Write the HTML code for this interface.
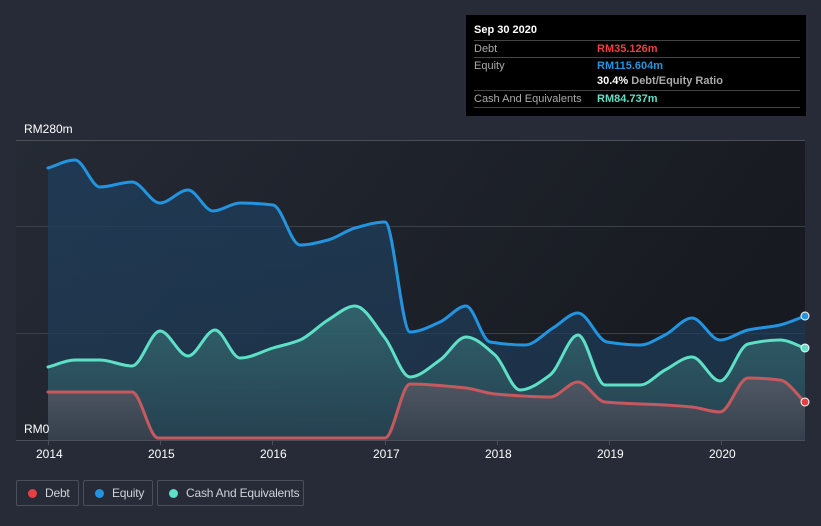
<!DOCTYPE html>
<html><head><style>
body{margin:0;width:821px;height:526px;background:#262b37;font-family:"Liberation Sans",sans-serif;overflow:hidden;position:relative}
.t{position:absolute;color:#fff;font-size:12px}
.leg{position:absolute;top:480px;height:26px;border:1px solid #4a4f5a;border-radius:2px;color:#cfd2d8;font-size:12px;line-height:24px;box-sizing:border-box;white-space:nowrap;letter-spacing:-0.2px}
.leg i{display:inline-block;width:9px;height:9px;border-radius:50%;margin:0 8px 0 11px;vertical-align:-1px}
#tip{position:absolute;left:466px;top:15px;width:340px;height:101px;background:#000;font-size:11px}
#tip .r{position:absolute;left:8px;right:6px;border-top:1px solid #444;height:17px;line-height:17px;color:#aaa}
#tip .r span{position:absolute;left:123px;font-weight:bold}
</style></head><body>
<svg width="821" height="526" style="position:absolute;left:0;top:0">
<defs>
<linearGradient id="bg" x1="0" y1="0" x2="1" y2="0.3"><stop offset="0" stop-color="#252a35"/><stop offset="1" stop-color="#171a20"/></linearGradient>
<linearGradient id="eq" x1="0" y1="0" x2="0" y2="1"><stop offset="0" stop-color="#1e4060" stop-opacity=".7"/><stop offset="1" stop-color="#1e3a55" stop-opacity=".7"/></linearGradient>
<linearGradient id="ca" x1="0" y1="0" x2="0" y2="1"><stop offset="0" stop-color="#3e7f82" stop-opacity=".6"/><stop offset="1" stop-color="#2b4a55" stop-opacity=".6"/></linearGradient>
<linearGradient id="de" x1="0" y1="0" x2="0" y2="1"><stop offset="0" stop-color="#5a5a66" stop-opacity=".8"/><stop offset="1" stop-color="#3a404c" stop-opacity=".8"/></linearGradient>
</defs>
<rect x="16" y="140" width="789" height="300" fill="url(#bg)"/>
<g stroke="#3a3f4a" stroke-width="1"><line x1="16" y1="140.5" x2="805" y2="140.5" stroke="#4a4f5a"/><line x1="16" y1="226.5" x2="805" y2="226.5"/><line x1="16" y1="333.5" x2="805" y2="333.5"/><line x1="16" y1="440.5" x2="805" y2="440.5" stroke="#4a4f5a"/></g>
<g stroke="#4a4f5a"><line x1="48.5" y1="440" x2="48.5" y2="445"/><line x1="160.5" y1="440" x2="160.5" y2="445"/><line x1="272.5" y1="440" x2="272.5" y2="445"/><line x1="385.5" y1="440" x2="385.5" y2="445"/><line x1="497.5" y1="440" x2="497.5" y2="445"/><line x1="609.5" y1="440" x2="609.5" y2="445"/><line x1="721.5" y1="440" x2="721.5" y2="445"/></g>
<path id="eqa" fill="url(#eq)"/><path id="caa" fill="url(#ca)"/><path id="dea" fill="url(#de)"/>
<g fill="none" stroke-width="3" stroke-linejoin="round" stroke-linecap="round">
<path id="eql" stroke="#2394df"/><path id="cal" stroke="#5ee0c6"/><path id="del" stroke="#c5595e"/>
</g>
<circle cx="805" cy="316" r="4" fill="#2394df" stroke="#fff" stroke-width="1"/>
<circle cx="805" cy="348" r="4" fill="#5ee0c6" stroke="#fff" stroke-width="1"/>
<circle cx="805" cy="402" r="4" fill="#e84040" stroke="#fff" stroke-width="1"/>
</svg>
<script>
function sm(p){var n=p.length,s=[],m=[];for(var i=0;i<n-1;i++)s.push((p[i+1][1]-p[i][1])/(p[i+1][0]-p[i][0]));
for(i=0;i<n;i++){if(i==0)m.push(s[0]);else if(i==n-1)m.push(s[n-2]);else if(s[i-1]*s[i]<=0)m.push(0);else m.push(2/(1/s[i-1]+1/s[i]));}
var d="M"+p[0][0]+","+p[0][1];for(i=0;i<n-1;i++){var h=(p[i+1][0]-p[i][0])/3;
d+=" C"+(p[i][0]+h)+","+(p[i][1]+m[i]*h)+" "+(p[i+1][0]-h)+","+(p[i+1][1]-m[i+1]*h)+" "+p[i+1][0]+","+p[i+1][1];}return d;}
var E=[[48,168],[75,160],[100,187],[132,182],[160,203],[188,190],[213,211],[240,203],[273,205],[300,245],[328,240],[355,228],[385,222],[410,332],[440,322],[466,306],[490,342],[525,345],[553,328],[578,313],[607,342],[640,345],[665,335],[692,318],[720,340],[748,330],[780,325],[805,316]];
var C=[[48,367],[75,360],[100,360],[132,366],[160,331],[188,356],[215,330],[240,358],[273,348],[300,340],[328,320],[355,306],[385,338],[410,377],[440,360],[466,337],[495,355],[520,390],[550,375],[578,335],[605,385],[640,385],[665,370],[692,357],[720,381],[748,344],[780,340],[805,348]];
var D=[[48,392],[132,392],[158,438],[385,438],[410,384],[466,388],[495,394],[550,397],[578,382],[605,402],[665,405],[692,407],[720,412],[748,378],[780,380],[805,402]];
[["eq",E],["ca",C],["de",D]].forEach(function(s){var d=sm(s[1]);document.getElementById(s[0]+"l").setAttribute("d",d);document.getElementById(s[0]+"a").setAttribute("d",d+" L805,440 L48,440Z");});
</script>
<div class="t" style="left:24px;top:122px">RM280m</div>
<div class="t" style="left:24px;top:422px">RM0</div>
<div class="t" style="left:36px;top:447px">2014</div>
<div class="t" style="left:148px;top:447px">2015</div>
<div class="t" style="left:260px;top:447px">2016</div>
<div class="t" style="left:373px;top:447px">2017</div>
<div class="t" style="left:485px;top:447px">2018</div>
<div class="t" style="left:597px;top:447px">2019</div>
<div class="t" style="left:709px;top:447px">2020</div>
<div class="leg" style="left:16px;width:63px"><i style="background:#e84040"></i>Debt</div>
<div class="leg" style="left:83px;width:70px"><i style="background:#2394df"></i>Equity</div>
<div class="leg" style="left:157px;width:147px"><i style="background:#5ee0c6"></i>Cash And Equivalents</div>
<div id="tip">
<div style="position:absolute;left:8px;top:9px;color:#fff;font-weight:bold">Sep 30 2020</div>
<div class="r" style="top:25px">Debt<span style="color:#e84040">RM35.126m</span></div>
<div class="r" style="top:42px">Equity<span style="color:#2394df">RM115.604m</span></div>
<div class="r" style="top:58px;border:none"><span style="color:#fff">30.4% <b style="color:#aaa">Debt/Equity Ratio</b></span></div>
<div class="r" style="top:75px">Cash And Equivalents<span style="color:#5ee0c6">RM84.737m</span></div>
<div class="r" style="top:92px;height:0"></div>
</div>
</body></html>
